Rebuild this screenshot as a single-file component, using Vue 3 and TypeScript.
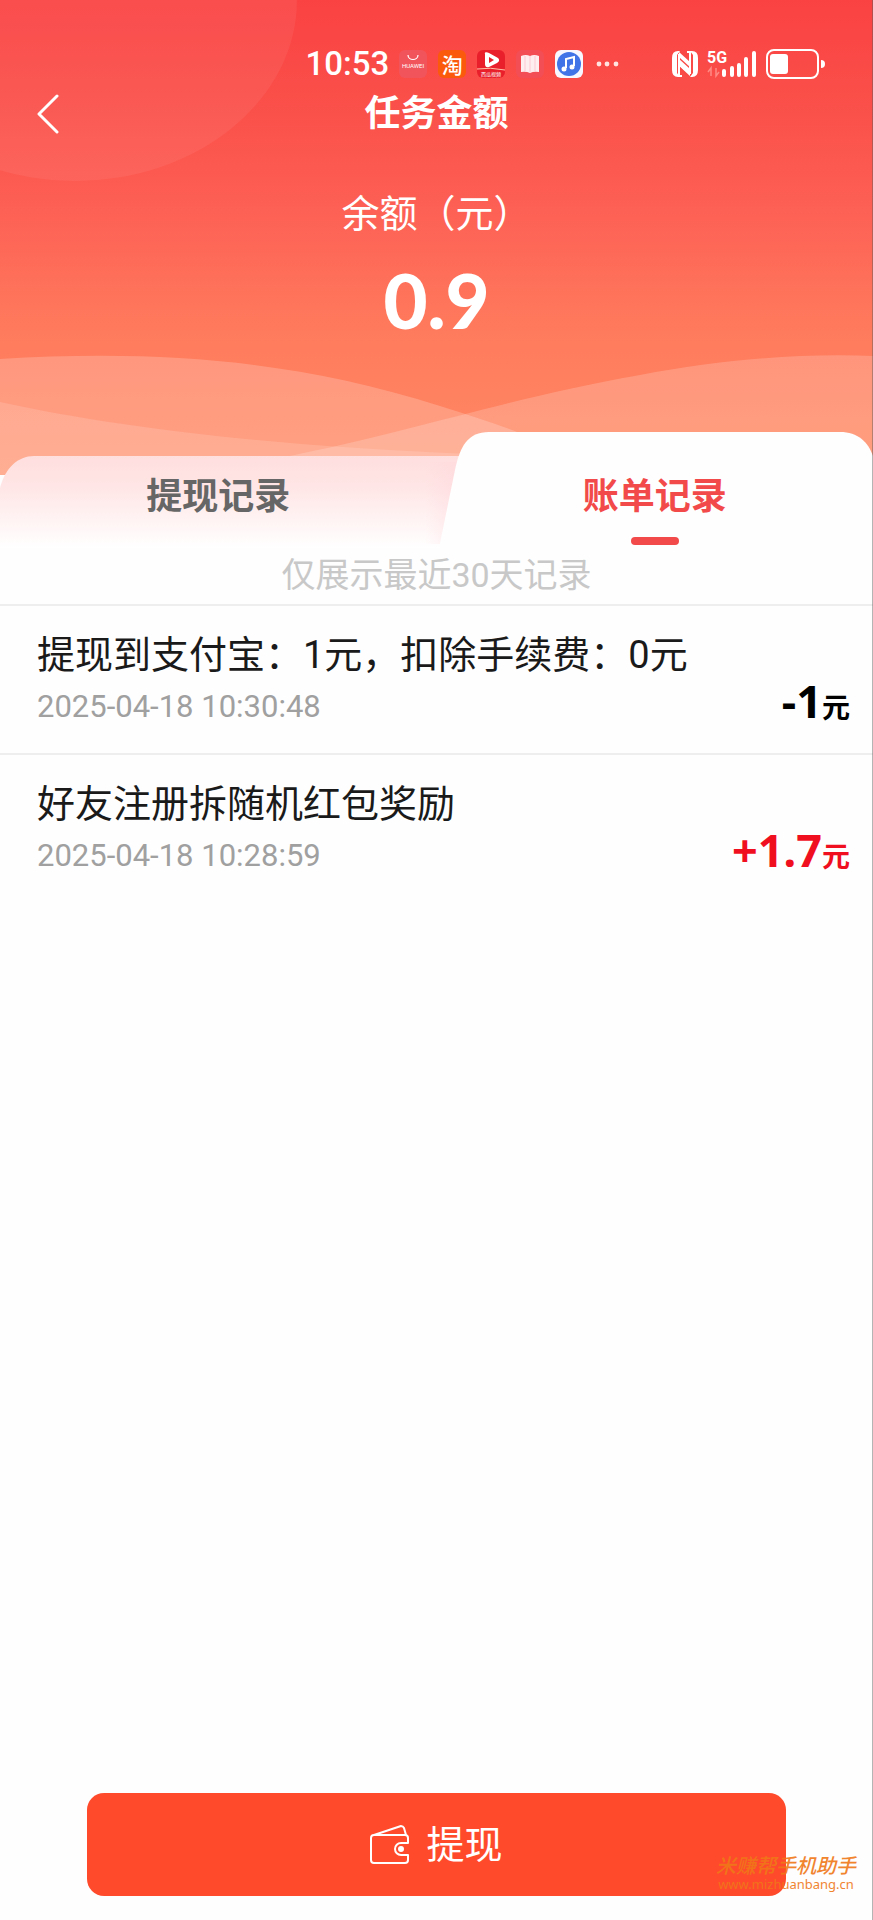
<script setup lang="ts">
import { ref } from 'vue'

interface BillRecord {
  title: string
  time: string
  amount: string
  income: boolean
}

const activeTab = ref<'withdraw' | 'bill'>('bill')

const records: BillRecord[] = [
  { title: '提现到支付宝：1元，扣除手续费：0元', time: '2025-04-18 10:30:48', amount: '-1', income: false },
  { title: '好友注册拆随机红包奖励', time: '2025-04-18 10:28:59', amount: '+1.7', income: true },
]
</script>

<template>
  <div class="page">
    <header class="hero">
      <svg class="hero-art" viewBox="0 0 873 475" preserveAspectRatio="none" aria-hidden="true">
        <ellipse cx="75" cy="0" rx="222" ry="181" fill="#fff" fill-opacity="0.06" />
        <path d="M0 359C150 350 290 358 440 406C500 425 550 440 600 475H0Z" fill="#fff" fill-opacity="0.2" />
        <path d="M0 402C130 430 280 446 470 454V475H0Z" fill="#fff" fill-opacity="0.14" />
        <path d="M280 458C420 430 500 400 640 375C720 360 800 353 873 356V475H280Z" fill="#fff" fill-opacity="0.19" />
      </svg>

      <div class="status">
        <span class="clock">10:53</span>
        <div class="apps">
          <svg width="28" height="28" viewBox="0 0 28 28" aria-hidden="true">
            <rect width="28" height="28" rx="6" fill="#f2545c" />
            <path d="M9 5C9 11 19 11 19 5" fill="none" stroke="#fff" stroke-width="1.2" />
            <text x="14" y="18" text-anchor="middle" class="tiny" font-size="6">HUAWEI</text>
          </svg>
          <span class="tao">淘</span>
          <svg width="28" height="28" viewBox="0 0 28 28" aria-hidden="true">
            <rect width="28" height="28" rx="6" fill="#e9202b" />
            <path d="M8 4C7 2 10 2 12 3L21 8C23 10 22 12 20 13L12 17C9 18 8 16 8 14Z" fill="#fff" />
            <path d="M12 7L17 10L12 13Z" fill="#e9202b" />
            <path d="M0 19Q13 17 28 20" fill="none" stroke="#ffc0a8" stroke-width="1" />
            <text x="14" y="26" text-anchor="middle" class="tiny" font-size="5">西瓜视频</text>
          </svg>
          <svg width="28" height="28" viewBox="0 0 28 28" aria-hidden="true">
            <rect width="28" height="28" rx="6" fill="#f34e55" />
            <path d="M5 6Q10 4 14 6Q18 4 23 6V22Q18 21 14 23Q10 21 5 22Z" fill="#ffeef0" />
            <path d="M14 6V22M9 6V21M19 6V21" stroke="#fbc8d0" stroke-width="1" />
          </svg>
          <svg width="28" height="28" viewBox="0 0 28 28" aria-hidden="true">
            <rect width="28" height="28" rx="6" fill="#f6f7ff" />
            <circle cx="14" cy="14" r="12" fill="#4174e6" />
            <path d="M11 18V9L19 7V16" fill="none" stroke="#fff" stroke-width="2" />
            <circle cx="9" cy="19" r="2.5" fill="#fff" />
            <circle cx="17" cy="17" r="2.5" fill="#fff" />
          </svg>
          <svg width="28" height="28" viewBox="0 0 28 28" aria-hidden="true">
            <g fill="#ffe3e0"><circle cx="5" cy="14" r="2.4" /><circle cx="13" cy="14" r="2.4" /><circle cx="22" cy="14" r="2.4" /></g>
          </svg>
        </div>
        <div class="system">
          <svg width="26" height="28" viewBox="0 0 26 28" aria-hidden="true">
            <path d="M8 1H6Q0 1 0 8V20Q0 27 6 27H8L5 23V5Z" fill="#fff" />
            <path d="M18 1H20Q26 1 26 8V20Q26 27 20 27H18L21 23V5Z" fill="#fff" />
            <path d="M7 2L18 12V26L7 16Z" fill="#fff" />
            <path d="M7 8L18 18M7 17L16 26M9 2L18 10" stroke="#f94b46" stroke-width="1.4" />
            <path d="M7 4V26H10M18 24V2H15" fill="none" stroke="#fff" stroke-width="2" />
          </svg>
          <svg width="50" height="30" viewBox="0 0 50 30" aria-hidden="true">
            <text x="0" y="14" class="net" font-size="16">5G</text>
            <path d="M4 27V19L1 23M9 19V27L12 23" fill="none" stroke="#ff8a84" stroke-width="1.5" />
            <g stroke="#fff" stroke-width="4" stroke-linecap="round">
              <path d="M17 22V26M25 19V26M32 16V26M39 10V26M47 4V26" />
            </g>
          </svg>
          <svg width="60" height="30" viewBox="0 0 60 30" aria-hidden="true">
            <rect x="1" y="1" width="51" height="28" rx="7" fill="none" stroke="#fff" stroke-width="2" />
            <rect x="4" y="5" width="18" height="20" rx="3" fill="#fff" />
            <path d="M55 11Q59 11 59 15Q59 19 55 19Z" fill="#fff" />
          </svg>
        </div>
      </div>

      <nav class="nav">
        <button class="back" type="button" aria-label="返回">
          <svg width="24" height="40" viewBox="0 0 24 40" aria-hidden="true">
            <path d="M21 2L3 20L21 38" fill="none" stroke="#fff" stroke-width="3" stroke-linecap="round" stroke-linejoin="round" />
          </svg>
        </button>
        <h1>任务金额</h1>
      </nav>

      <div class="balance">
        <p class="balance-label">余额（元）</p>
        <p class="balance-value">0.9</p>
      </div>
    </header>

    <div class="tabs" role="tablist">
      <svg class="tabs-art" viewBox="0 0 873 116" preserveAspectRatio="none" aria-hidden="true">
        <defs>
          <linearGradient id="tabFade" x1="0" y1="0" x2="0" y2="1">
            <stop offset="0" stop-color="#ffdede" />
            <stop offset="0.35" stop-color="#ffe6e6" />
            <stop offset="1" stop-color="#fff" />
          </linearGradient>
          <linearGradient id="tabEdge" x1="0" y1="0" x2="1" y2="0">
            <stop offset="0" stop-color="#ffd6dc" stop-opacity="0" />
            <stop offset="1" stop-color="#ffd6dc" stop-opacity="0.5" />
          </linearGradient>
        </defs>
        <path d="M0 56C5 36 18 24 34 24H480V116H0Z" fill="url(#tabFade)" />
        <path d="M425 30H462L442 112H425Z" fill="url(#tabEdge)" />
        <path d="M439 116L455 38C460 14 468 0 489 0H840C858 0 868 10 873 24V116Z" fill="#fefefe" />
      </svg>
      <button
        class="tab"
        type="button"
        role="tab"
        :class="{ active: activeTab === 'withdraw' }"
        :aria-selected="activeTab === 'withdraw'"
        @click="activeTab = 'withdraw'"
      >
        提现记录
      </button>
      <button
        class="tab"
        type="button"
        role="tab"
        :class="{ active: activeTab === 'bill' }"
        :aria-selected="activeTab === 'bill'"
        @click="activeTab = 'bill'"
      >
        账单记录
      </button>
    </div>

    <main class="content">
      <p class="hint">仅展示最近30天记录</p>
      <ul class="records">
        <li v-for="item in records" :key="item.time" class="record">
          <div class="info">
            <p class="title">{{ item.title }}</p>
            <time class="time">{{ item.time }}</time>
          </div>
          <p class="amount" :class="{ income: item.income }">{{ item.amount }}<span class="unit">元</span></p>
        </li>
      </ul>
    </main>

    <footer class="footer">
      <button class="withdraw" type="button">
        <svg width="40" height="40" viewBox="0 0 40 40" fill="none" stroke="#fff" stroke-width="2" stroke-linejoin="round" aria-hidden="true">
          <path d="M38 18V13Q38 10 35 10H4Q1 10 1 13V35Q1 38 4 38H35Q38 38 38 35V30H31A6 6 0 0 1 31 18Z" />
          <path d="M4 10L31 1Q33 1 34 3L36 10" />
          <circle cx="31" cy="24" r="2" fill="#fff" />
        </svg>
        <span class="withdraw-label">提现</span>
      </button>
      <div class="watermark">
        <span class="mark-name">米赚帮手机助手</span>
        <span class="mark-url">www.mizhuanbang.cn</span>
      </div>
    </footer>
  </div>
</template>

<style>
body {
  margin: 0;
}
</style>

<style scoped>
.page {
  position: relative;
  display: flex;
  flex-direction: column;
  min-height: 100vh;
  background: #fefefe;
  font-family: Roboto, "Noto Sans CJK SC", sans-serif;
}

.page::after {
  content: "";
  position: absolute;
  top: 0;
  right: 0;
  bottom: 0;
  width: 1px;
  background: rgba(90, 90, 90, 0.45);
}

p,
h1,
ul {
  margin: 0;
  padding: 0;
}

button {
  border: 0;
  padding: 0;
  background: none;
  font-family: inherit;
  cursor: pointer;
}

svg {
  display: block;
  flex: none;
}

.hero {
  position: relative;
  box-sizing: border-box;
  min-height: 475px;
  padding-top: 44px;
  background: linear-gradient(#fa4242 0%, #fa4e49 20%, #fd5f54 43%, #ff7b5d 70%, #ff8a63 100%);
  color: #fff;
}

.hero-art {
  position: absolute;
  inset: 0;
  width: 100%;
  height: 100%;
}

.status {
  position: relative;
  display: flex;
  align-items: center;
  height: 40px;
  padding: 0 47px 0 35%;
}

.clock {
  font-size: 33px;
  font-weight: 500;
  line-height: 40px;
}

.apps {
  display: flex;
  gap: 11px;
  margin-left: 10px;
}

.system {
  display: flex;
  align-items: center;
  gap: 9px;
  margin-left: auto;
}

.tiny {
  fill: #fff;
  font-family: Roboto, "Noto Sans CJK SC", sans-serif;
}

.tao {
  width: 28px;
  height: 28px;
  border-radius: 6px;
  background: #fb5a0c;
  font-family: "Noto Sans CJK SC", sans-serif;
  font-size: 21px;
  font-weight: 500;
  line-height: 28px;
  text-align: center;
}

.net {
  fill: #fff;
  font-family: Roboto, sans-serif;
  font-weight: 700;
}

.nav {
  position: relative;
  display: grid;
  grid-template-columns: 64px 1fr 64px;
  align-items: center;
  height: 60px;
}

.back {
  display: flex;
  justify-content: flex-end;
  padding-right: 4px;
}

h1 {
  font-size: 36px;
  font-weight: 700;
  line-height: 40px;
  text-align: center;
}

.balance {
  position: relative;
  padding-top: 42px;
  text-align: center;
}

.balance-label {
  font-size: 38px;
  line-height: 56px;
}

.balance-value {
  font-family: Lato, sans-serif;
  font-size: 76px;
  font-weight: 900;
  line-height: 116px;
}

.tabs {
  position: relative;
  display: grid;
  grid-template-columns: 1fr 1fr;
  height: 116px;
  margin-top: -43px;
}

.tabs-art {
  position: absolute;
  inset: 0;
  width: 100%;
  height: 100%;
}

.tab {
  position: relative;
  padding-top: 6px;
  color: #666;
  font-size: 36px;
  font-weight: 700;
}

.tab.active {
  color: #f24a4a;
}

.tab.active::after {
  content: "";
  position: absolute;
  bottom: 3px;
  left: 50%;
  width: 48px;
  height: 8px;
  margin-left: -24px;
  border-radius: 4px;
  background: #f24a4a;
}

.hint {
  padding-bottom: 1px;
  color: #c8c8c8;
  font-size: 34px;
  line-height: 55px;
  text-align: center;
}

.records {
  list-style: none;
}

.record {
  display: flex;
  justify-content: space-between;
  align-items: flex-end;
  box-sizing: border-box;
  height: 149px;
  padding: 20px 23px 18px 37px;
  border-top: 2px solid #eee;
}

.info {
  padding-bottom: 4px;
}

.title {
  color: #1a1a1a;
  font-size: 38px;
  line-height: 56px;
}

.time {
  display: block;
  color: #a0a0a0;
  font-size: 31px;
  line-height: 48px;
}

.amount {
  color: #000;
  font-family: "Noto Sans", "Noto Sans CJK SC", sans-serif;
  font-size: 45px;
  font-weight: 700;
  line-height: 56px;
}

.amount.income {
  color: #f00f1e;
}

.unit {
  font-size: 28px;
}

.footer {
  position: relative;
  margin-top: auto;
  padding: 0 10% 24px;
}

.withdraw {
  display: flex;
  justify-content: center;
  align-items: center;
  gap: 16px;
  width: 100%;
  height: 103px;
  border-radius: 17px;
  background: #ff4b2c;
  color: #fff;
  font-size: 38px;
}

.withdraw-label {
  padding-bottom: 6px;
}

.watermark {
  position: absolute;
  right: 17px;
  bottom: 28px;
  display: flex;
  flex-direction: column;
  align-items: center;
  color: #f07818;
  opacity: 0.9;
  pointer-events: none;
}

.mark-name {
  font-size: 20px;
  font-style: italic;
  font-weight: 500;
  line-height: 20px;
}

.mark-url {
  font-family: "Noto Sans", sans-serif;
  font-size: 13px;
  line-height: 16px;
}
</style>
